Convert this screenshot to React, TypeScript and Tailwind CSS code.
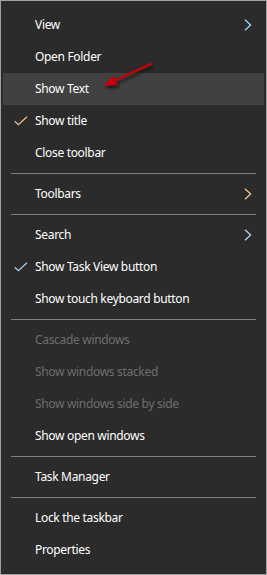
import React from "react";

type Item =
  | { kind: "sep" }
  | {
      kind: "item";
      label: string;
      check?: "orange" | "blue";
      sub?: "orange" | "blue";
      disabled?: boolean;
      hover?: boolean;
    };

const items: Item[] = [
  { kind: "item", label: "View", sub: "blue" },
  { kind: "item", label: "Open Folder" },
  { kind: "item", label: "Show Text", hover: true },
  { kind: "item", label: "Show title", check: "orange" },
  { kind: "item", label: "Close toolbar" },
  { kind: "sep" },
  { kind: "item", label: "Toolbars", sub: "orange" },
  { kind: "sep" },
  { kind: "item", label: "Search", sub: "blue" },
  { kind: "item", label: "Show Task View button", check: "blue" },
  { kind: "item", label: "Show touch keyboard button" },
  { kind: "sep" },
  { kind: "item", label: "Cascade windows", disabled: true },
  { kind: "item", label: "Show windows stacked", disabled: true },
  { kind: "item", label: "Show windows side by side", disabled: true },
  { kind: "item", label: "Show open windows" },
  { kind: "sep" },
  { kind: "item", label: "Task Manager" },
  { kind: "sep" },
  { kind: "item", label: "Lock the taskbar" },
  { kind: "item", label: "Properties" },
];

const tint = { orange: "#f3c58e", blue: "#a9d2f3" };

function Chevron({ color }: { color: string }) {
  return (
    <svg width="8" height="12" viewBox="0 0 8 12" className="shrink-0">
      <path d="M1 0.8 L6.6 6 L1 11.2" fill="none" stroke={color} strokeWidth="1.3" />
    </svg>
  );
}

function Check({ color }: { color: string }) {
  return (
    <svg width="14" height="10" viewBox="0 0 14 10">
      <path d="M0.8 5.2 L4.4 8.6 L13 0.8" fill="none" stroke={color} strokeWidth="1.2" />
    </svg>
  );
}

export default function App() {
  return (
    <div className="relative h-[575px] w-[267px] border border-[#a0a0a0] bg-[#2b2b2b] px-[2px] pt-[8px] pb-[8px] text-[12px] [font-family:'Noto_Sans','Open_Sans',sans-serif]">
      {items.map((it, i) =>
        it.kind === "sep" ? (
          <div key={i} className="flex h-[9px] items-center px-[8px]">
            <div className="h-px w-full bg-[#808080]" />
          </div>
        ) : (
          <div
            key={i}
            className={`flex h-[32px] items-center ${it.hover ? "bg-[#414141]" : ""}`}
          >
            <div className="flex w-[32px] justify-center pl-[3px]">
              {it.check && <Check color={tint[it.check]} />}
            </div>
            <span
              className={`flex-1 tracking-[-0.32px] ${it.disabled ? "text-[#6d6d6d]" : "text-white"}`}
            >
              {it.label}
            </span>
            <div className="flex w-[20px] justify-start">
              {it.sub && <Chevron color={tint[it.sub]} />}
            </div>
          </div>
        )
      )}

      {/* red annotation arrow */}
      <svg
        className="pointer-events-none absolute left-[95px] top-[55px]"
        width="65"
        height="45"
        viewBox="0 0 65 45"
      >
        <defs>
          <filter id="sh" x="-20%" y="-20%" width="150%" height="160%">
            <feDropShadow dx="1.5" dy="2.5" stdDeviation="1.6" floodColor="#000" floodOpacity="0.65" />
          </filter>
        </defs>
        <g filter="url(#sh)">
          <path d="M55 8 L18 25" stroke="#c8000a" strokeWidth="2.4" strokeLinecap="round" />
          <path d="M7 30 L17 20 L22 29 Z" fill="#c8000a" />
        </g>
      </svg>
    </div>
  );
}
